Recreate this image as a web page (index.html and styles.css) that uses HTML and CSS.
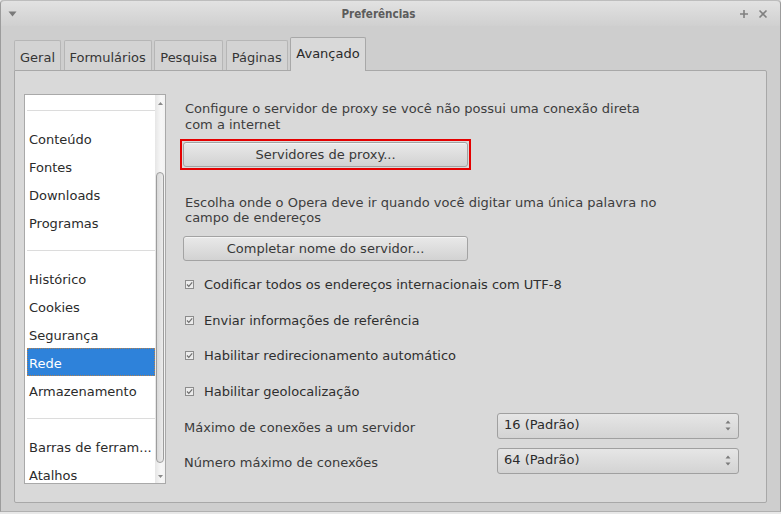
FILE: index.html
```html
<!DOCTYPE html>
<html lang="pt">
<head>
<meta charset="utf-8">
<title>Preferências</title>
<link rel="stylesheet" href="styles.css">
</head>
<body>
<div class="window">
  <div class="titlebar">
    <span class="tb-menu">
      <svg width="9" height="6" viewBox="0 0 9 6"><path d="M0.5 0.5 L8.5 0.5 L4.5 5.5 Z" fill="#7a7a7a"/></svg>
    </span>
    <span class="tb-title">Preferências</span>
    <span class="tb-buttons">
      <svg width="10" height="10" viewBox="0 0 10 10"><path d="M5 1 V9 M1 5 H9" stroke="#808080" stroke-width="1.6"/></svg>
      <svg width="10" height="10" viewBox="0 0 10 10"><path d="M1.5 1.5 L8.5 8.5 M8.5 1.5 L1.5 8.5" stroke="#808080" stroke-width="1.6"/></svg>
    </span>
  </div>
  <div class="body">
    <div class="tabs">
      <div class="tab">Geral</div>
      <div class="tab">Formulários</div>
      <div class="tab">Pesquisa</div>
      <div class="tab">Páginas</div>
      <div class="tab active">Avançado</div>
    </div>
    <div class="panel">
      <div class="listbox">
        <div class="list-items">
          <div class="sep"></div>
          <div class="item">Conteúdo</div>
          <div class="item">Fontes</div>
          <div class="item">Downloads</div>
          <div class="item">Programas</div>
          <div class="sep"></div>
          <div class="item">Histórico</div>
          <div class="item">Cookies</div>
          <div class="item">Segurança</div>
          <div class="item selected">Rede</div>
          <div class="item">Armazenamento</div>
          <div class="sep"></div>
          <div class="item">Barras de ferram...</div>
          <div class="item">Atalhos</div>
        </div>
        <div class="scrollbar">
          <div class="sb-arrow">
            <svg width="5" height="3" viewBox="0 0 5 3"><path d="M0 3 L2.5 0 L5 3 Z" fill="#8a8a8a"/></svg>
          </div>
          <div class="sb-track"><div class="sb-thumb"></div></div>
          <div class="sb-arrow">
            <svg width="5" height="3" viewBox="0 0 5 3"><path d="M0 0 L5 0 L2.5 3 Z" fill="#8a8a8a"/></svg>
          </div>
        </div>
      </div>
      <div class="content">
        <p class="desc">Configure o servidor de proxy se você não possui uma conexão direta<br>com a internet</p>
        <div class="focusbox"><div class="btn">Servidores de proxy...</div></div>
        <p class="desc desc2">Escolha onde o Opera deve ir quando você digitar uma única palavra no<br>campo de endereços</p>
        <div class="btn btn2">Completar nome do servidor...</div>
        <div class="checks">
          <div class="check"><span class="cb"><svg width="9" height="9" viewBox="0 0 9 9"><rect x="0.5" y="0.5" width="8" height="8" fill="#ececec" stroke="#8c8c8c"/><path d="M2 4.5 L3.8 6.3 L7.2 2.3" stroke="#6e6e6e" stroke-width="1.2" fill="none"/></svg></span>Codificar todos os endereços internacionais com UTF-8</div>
          <div class="check"><span class="cb"><svg width="9" height="9" viewBox="0 0 9 9"><rect x="0.5" y="0.5" width="8" height="8" fill="#ececec" stroke="#8c8c8c"/><path d="M2 4.5 L3.8 6.3 L7.2 2.3" stroke="#6e6e6e" stroke-width="1.2" fill="none"/></svg></span>Enviar informações de referência</div>
          <div class="check"><span class="cb"><svg width="9" height="9" viewBox="0 0 9 9"><rect x="0.5" y="0.5" width="8" height="8" fill="#ececec" stroke="#8c8c8c"/><path d="M2 4.5 L3.8 6.3 L7.2 2.3" stroke="#6e6e6e" stroke-width="1.2" fill="none"/></svg></span>Habilitar redirecionamento automático</div>
          <div class="check"><span class="cb"><svg width="9" height="9" viewBox="0 0 9 9"><rect x="0.5" y="0.5" width="8" height="8" fill="#ececec" stroke="#8c8c8c"/><path d="M2 4.5 L3.8 6.3 L7.2 2.3" stroke="#6e6e6e" stroke-width="1.2" fill="none"/></svg></span>Habilitar geolocalização</div>
        </div>
        <div class="field first">
          <span class="label">Máximo de conexões a um servidor</span>
          <div class="select"><span>16 (Padrão)</span><svg width="6" height="11" viewBox="0 0 6 11"><path d="M0.5 3.5 L3 0.5 L5.5 3.5 Z M0.5 7.5 L5.5 7.5 L3 10.5 Z" fill="#7a7a7a"/></svg></div>
        </div>
        <div class="field">
          <span class="label">Número máximo de conexões</span>
          <div class="select"><span>64 (Padrão)</span><svg width="6" height="11" viewBox="0 0 6 11"><path d="M0.5 3.5 L3 0.5 L5.5 3.5 Z M0.5 7.5 L5.5 7.5 L3 10.5 Z" fill="#7a7a7a"/></svg></div>
        </div>
      </div>
    </div>
  </div>
</div>
</body>
</html>
```

FILE: styles.css
```css
* { box-sizing: border-box; }
html, body { margin: 0; padding: 0; }
body {
  width: 781px;
  height: 514px;
  overflow: hidden;
  background: #e8e8e8;
  font-family: "DejaVu Sans", "Noto Sans", sans-serif;
  font-size: 13px;
  color: #333;
}
.window {
  width: 781px;
  height: 512px;
  background: #cecece;
  border-left: 1px solid #9c9c9c;
  border-right: 1px solid #9c9c9c;
  border-bottom: 1px solid #b0b0b0;
  border-radius: 4px 4px 0 0;
  display: flex;
  flex-direction: column;
}
.titlebar {
  height: 26px;
  flex: none;
  display: flex;
  align-items: center;
  background: linear-gradient(#e2e2e2, #d0d0d0);
  border-top: 1px solid #bdbdbd;
  border-radius: 4px 4px 0 0;
  padding: 0 12px 0 6px;
}
.tb-menu { width: 60px; display: flex; align-items: center; padding-left: 1px; }
.tb-title {
  flex: 1;
  text-align: center;
  font-family: "DejaVu Sans Condensed", "DejaVu Sans", sans-serif;
  font-weight: bold;
  font-size: 11.6px;
  color: #5c5c5c;
  padding-right: 18px;
}
.tb-buttons { width: 60px; display: flex; justify-content: flex-end; gap: 9px; }
.body {
  flex: 1;
  display: flex;
  flex-direction: column;
  padding: 11px 13px 0 13px;
}
.tabs {
  display: flex;
  align-items: flex-end;
  gap: 2.5px;
  height: 33px;
  flex: none;
  position: relative;
  z-index: 1;
}
.tab {
  height: 30px;
  padding: 0 5px;
  background: #d3d3d3;
  border: 1px solid #b6b6b6;
  border-bottom: none;
  border-radius: 2px 2px 0 0;
  display: flex;
  align-items: center;
  padding-top: 3px;
  color: #353535;
}
.tab.active {
  height: 34px;
  margin-bottom: -1px;
  background: #d9d9d9;
  border-color: #a8a8a8;
  padding-top: 0;
  padding-bottom: 3px;
  color: #2a2a2a;
}
.panel {
  height: 433px;
  flex: none;
  background: #d9d9d9;
  border: 1px solid #a8a8a8;
  border-radius: 0 2px 2px 2px;
  display: flex;
  padding: 23px 0 0 9px;
}
.listbox {
  width: 142px;
  height: 390px;
  flex: none;
  background: #fff;
  border: 1px solid #a9a9a9;
  display: flex;
  overflow: hidden;
}
.list-items {
  width: 130px;
  padding: 1px 0 0 2px;
  overflow: hidden;
}
.sep {
  height: 28px;
  display: flex;
  align-items: center;
}
.sep::after {
  content: "";
  display: block;
  width: 100%;
  height: 1px;
  background: #dcdcdc;
}
.item {
  height: 28px;
  line-height: 24px;
  padding: 4px 0 0 2px;
  white-space: nowrap;
  color: #2b2b2b;
}
.item.selected {
  background: #2e82da;
  color: #fff;
  outline: 1px dotted #b08050;
  outline-offset: -1px;
}
.scrollbar {
  width: 10px;
  flex: none;
  display: flex;
  flex-direction: column;
  background: linear-gradient(90deg, #e6e6e6, #f7f7f7 60%, #f2f2f2);
}
.sb-arrow {
  height: 15px;
  display: flex;
  align-items: center;
  justify-content: center;
  padding-top: 1px;
}
.sb-track {
  flex: 1;
  padding: 62px 1px 4px 1px;
}
.sb-thumb {
  height: 291px;
  border: 1px solid #9d9d9d;
  border-radius: 4px;
  background: linear-gradient(90deg, #d8d8d8, #ececec);
}
.content {
  flex: 1;
  padding-left: 17px;
  display: flex;
  flex-direction: column;
  align-items: flex-start;
}
.desc {
  margin: 7px 0 0 0;
  padding-left: 2px;
  line-height: 16px;
  color: #3d3d3d;
}
.desc2 { margin-top: 25px; line-height: 15px; }
.focusbox {
  margin: 6px 0 0 -3px;
  border: 2px solid #e40000;
  padding: 1px;
}
.btn {
  width: 285px;
  height: 25px;
  border: 1px solid #a3a3a3;
  border-radius: 3px;
  background: linear-gradient(#e9e9e9, #d2d2d2);
  display: flex;
  align-items: center;
  justify-content: center;
  color: #383838;
  box-shadow: inset 0 1px 0 rgba(255,255,255,0.5);
}
.btn2 { margin-top: 11px; }
.checks { margin-top: 6px; }
.check {
  height: 35.5px;
  display: flex;
  align-items: center;
  padding-left: 2px;
  color: #2f2f2f;
}
.cb { width: 19px; display: flex; align-items: center; }
.field {
  width: 556px;
  height: 35px;
  display: flex;
  align-items: center;
  justify-content: space-between;
}
.field.first { margin-top: -1px; }
.label { padding-left: 1px; padding-top: 3px; color: #3a3a3a; }
.select {
  width: 242px;
  height: 26px;
  border: 1px solid #a0a0a0;
  border-radius: 3px;
  background: linear-gradient(#e6e6e6, #d3d3d3);
  display: flex;
  align-items: center;
  justify-content: space-between;
  padding: 0 7px 0 6px;
  color: #2a2a2a;
}
.select span { padding-bottom: 3px; }
```
